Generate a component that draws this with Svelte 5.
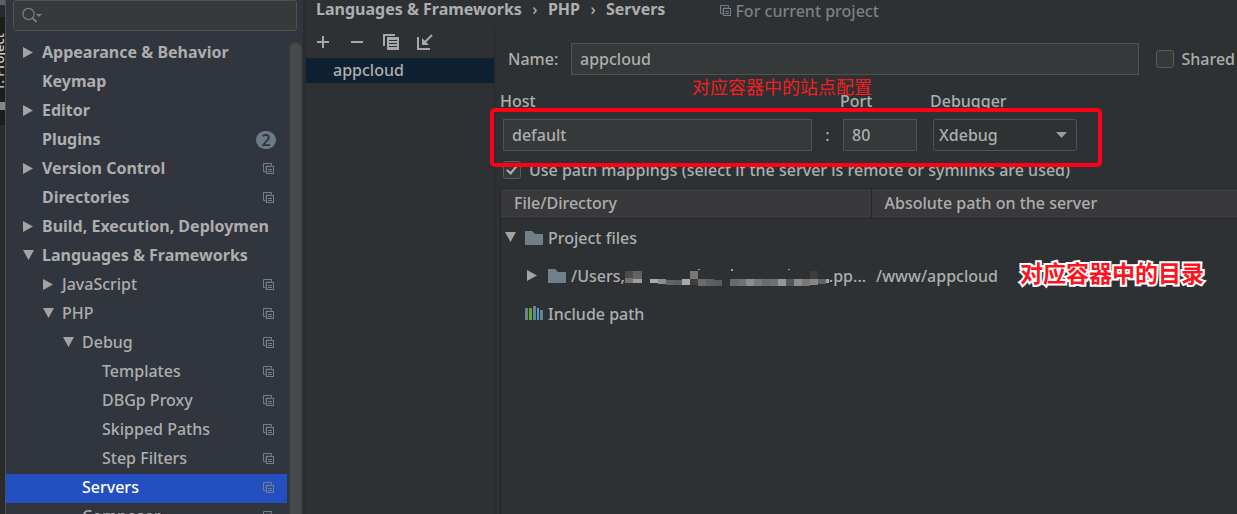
<script>
  const tree = [
    { label: 'Appearance & Behavior', level: 0, arrow: 'right' },
    { label: 'Keymap', level: 0 },
    { label: 'Editor', level: 0, arrow: 'right' },
    { label: 'Plugins', level: 0, badge: 2 },
    { label: 'Version Control', level: 0, arrow: 'right', project: true },
    { label: 'Directories', level: 0, project: true },
    { label: 'Build, Execution, Deploymen', level: 0, arrow: 'right' },
    { label: 'Languages & Frameworks', level: 0, arrow: 'down' },
    { label: 'JavaScript', level: 1, arrow: 'right', project: true },
    { label: 'PHP', level: 1, arrow: 'down', project: true },
    { label: 'Debug', level: 2, arrow: 'down', project: true },
    { label: 'Templates', level: 3, project: true },
    { label: 'DBGp Proxy', level: 3, project: true },
    { label: 'Skipped Paths', level: 3, project: true },
    { label: 'Step Filters', level: 3, project: true },
    { label: 'Servers', level: 2, project: true, selected: true },
    { label: 'Composer', level: 2, project: true }
  ];

  // Blocks of the pixelated part of the path: x, y, width, height, grey level
  const mosaic = [
    [0, 5, 8, 7, 75], [8, 5, 9, 9, 98], [0, 12, 8, 5, 115], [8, 13, 9, 4, 158],
    [25, 13, 8, 4, 170], [33, 13, 8, 5, 140], [41, 14, 8, 5, 100], [49, 14, 8, 5, 95],
    [57, 13, 8, 6, 168], [65, 5, 8, 8, 120], [65, 13, 8, 6, 62], [73, 13, 8, 7, 108],
    [81, 13, 8, 7, 95], [89, 14, 8, 6, 92], [73, 3, 2, 1, 160], [106, 3, 2, 2, 165],
    [163, 3, 2, 1, 150], [105, 13, 8, 7, 105], [113, 13, 8, 7, 112], [121, 13, 8, 7, 140],
    [129, 13, 8, 7, 120], [137, 13, 8, 7, 108], [145, 13, 8, 7, 112], [153, 13, 8, 7, 150],
    [161, 13, 8, 7, 85], [169, 13, 8, 7, 140], [177, 13, 8, 7, 120], [185, 5, 8, 8, 60],
    [185, 13, 8, 6, 135], [193, 13, 8, 5, 98], [201, 13, 3, 4, 165]
  ];

  let query = $state('');
  let name = $state('appcloud');
  let host = $state('default');
  let port = $state('80');
  let shared = $state(false);
  let mappings = $state(true);
</script>

{#snippet projectIcon()}
  <svg class="project" width="12" height="12" viewBox="0 0 12 12" fill="none" stroke="currentColor" aria-hidden="true">
    <path d="M2.5 8.500H.5V.5h8v2" />
    <path d="M3 10V3h6" opacity=".6" />
    <rect x="3.500" y="3.500" width="7" height="7" />
    <path d="M5 6.500h4M5 8.500h4" />
  </svg>
{/snippet}

{#snippet arrowIcon(dir)}
  <svg class="arrow" width="12" height="12" viewBox="0 0 12 12" fill="currentColor" aria-hidden="true">
    {#if dir === 'right'}
      <path d="M1 0v11l10-5.500z" />
    {:else}
      <path d="M1 0h11l-5.500 10z" />
    {/if}
  </svg>
{/snippet}

{#snippet folderIcon()}
  <svg class="folder" width="18" height="15" viewBox="0 0 18 15" aria-hidden="true">
    <path d="M0 0h7l3 3h8v11H0z" fill="#70808a" />
  </svg>
{/snippet}

<div class="window">
  <div class="strip"><span>1: Project</span></div>

  <aside>
    <label class="search">
      <svg width="22" height="18" viewBox="0 0 22 18" fill="none" stroke="#6f7f8a" aria-hidden="true">
        <circle cx="6.500" cy="7" r="5.600" stroke-width="1.300" />
        <path d="M10.500 11l4 4" stroke-width="2" />
        <path d="M14 7h6l-3 3z" fill="#6f7f8a" stroke="none" />
      </svg>
      <input type="search" aria-label="Search settings" bind:value={query} />
    </label>
    <div class="body">
      <nav>
        {#each tree as item}
          <a href="#settings" class="row level{item.level}" class:selected={item.selected}>
            <span class="slot">{#if item.arrow}{@render arrowIcon(item.arrow)}{/if}</span>
            <span class="label">{item.label}</span>
            {#if item.badge}<span class="badge">{item.badge}</span>{/if}
            {#if item.project}{@render projectIcon()}{/if}
          </a>
        {/each}
      </nav>
      <div class="scroll"></div>
    </div>
  </aside>

  <main>
    <header>
      <b>Languages &amp; Frameworks</b><i>›</i><b>PHP</b><i>›</i><b>Servers</b>
      <span class="scope">{@render projectIcon()}For current project</span>
    </header>

    <div class="content">
      <section class="list">
        <div class="toolbar">
          <button aria-label="Add">
            <svg width="16" height="16" viewBox="0 0 16 16" stroke="currentColor" stroke-width="2"><path d="M2 8h12M8 2v12" /></svg>
          </button>
          <button aria-label="Remove">
            <svg width="16" height="16" viewBox="0 0 16 16" stroke="currentColor" stroke-width="2"><path d="M2 8h12" /></svg>
          </button>
          <button aria-label="Copy">
            <svg width="16" height="16" viewBox="0 0 16 16" fill="currentColor">
              <path d="M0 0h12v2H2v10H0z" />
              <path fill-rule="evenodd" d="M4 3h12v13H4zM6 6h8v1H6zM6 9h8v1H6zM6 12h8v1H6z" />
            </svg>
          </button>
          <button aria-label="Import">
            <svg width="16" height="16" viewBox="0 0 16 16" fill="none" stroke="currentColor" stroke-width="2">
              <path d="M1 3v12h12" /><path d="M15 1L8 8" /><path d="M5 4v7h7z" fill="currentColor" stroke="none" />
            </svg>
          </button>
        </div>
        <a class="server" href="#appcloud">appcloud</a>
      </section>

      <section class="form">
        <div class="name-row">
          <label for="name">Name:</label>
          <input id="name" type="text" bind:value={name} />
          <label class="check"><input type="checkbox" bind:checked={shared} />Shared</label>
        </div>

        <div class="connection">
          <p class="note">对应容器中的站点配置</p>
          <label for="host">Host</label>
          <label for="port">Port</label>
          <label for="debugger">Debugger</label>
          <input id="host" type="text" bind:value={host} />
          <span class="colon">:</span>
          <input id="port" type="text" bind:value={port} />
          <div class="combo">
            <select id="debugger"><option>Xdebug</option><option>Zend Debugger</option></select>
            <svg width="11" height="7" viewBox="0 0 11 7" aria-hidden="true"><path d="M0 0h11L5.500 6z" fill="#999b9c" /></svg>
          </div>
          <div class="frame"></div>
        </div>

        <label class="check mappings">
          <input type="checkbox" bind:checked={mappings} />Use path mappings (select if the server is remote or symlinks are used)
        </label>

        <div class="table">
          <table>
            <thead>
              <tr><th>File/Directory</th><th>Absolute path on the server</th></tr>
            </thead>
            <tbody>
              <tr>
                <td><div class="cell">{@render arrowIcon('down')}{@render folderIcon()}Project files</div></td>
                <td></td>
              </tr>
              <tr>
                <td>
                  <div class="cell nested">
                    {@render arrowIcon('right')}{@render folderIcon()}<span class="path">/Users,<svg width="204" height="20" viewBox="0 0 204 20" aria-hidden="true">
                      {#each mosaic as [x, y, w, h, g]}
                        <rect {x} {y} width={w} height={h} fill="rgb({g},{g},{g})" />
                      {/each}
                    </svg>.pp...</span>
                  </div>
                </td>
                <td><div class="target">/www/appcloud<strong>对应容器中的目录</strong></div></td>
              </tr>
              <tr>
                <td>
                  <div class="cell include">
                    <svg width="18" height="16" viewBox="0 0 18 16" aria-hidden="true">
                      <path d="M0 2h3v12H0zM8 0h3v14H8zM15 4h3v10h-3z" fill="#70808a" />
                      <path d="M4 2h3v12H4z" fill="#59a839" /><path d="M12 2h2v12h-2z" fill="#35a5dc" />
                    </svg>Include path
                  </div>
                </td>
                <td></td>
              </tr>
            </tbody>
          </table>
        </div>
      </section>
    </div>
  </main>
</div>

<style>
  :global(body) { margin: 0; background: #2e3133; }
  .window {
    display: flex; height: 100vh; overflow: hidden; color: #adaeae;
    font: 500 16px/20px "Noto Sans", "Noto Sans CJK SC", sans-serif;
  }
  svg { flex: none; display: block; }
  a { color: inherit; text-decoration: none; }

  .strip {
    width: 5px; flex: none; overflow: hidden; display: flex; justify-content: flex-end;
    background: linear-gradient(#59616a 5px, #292b2c 5px 17px, #1c1d1d 17px 102px, #85888a 102px 110px, #1c1d1d 110px 125px, #292b2c 125px);
    border-right: 1px solid #4d5155;
  }
  .strip span {
    writing-mode: vertical-rl; transform: rotate(180deg); height: 60px; margin-top: 31px;
    font-size: 13px; line-height: 12px; color: #d0d0d0; white-space: nowrap; flex: none;
  }

  aside { width: 297px; flex: none; display: flex; flex-direction: column; background: #31353d; }
  .search {
    display: flex; align-items: center; box-sizing: border-box; height: 31px; margin: 0 6px 8px 7px; padding-left: 8px;
    flex: none; background: #363a3a; border: 1px solid #505251; border-radius: 3px;
  }
  .search input { flex: 1; min-width: 0; border: 0; outline: 0; background: none; color: inherit; font: inherit; }
  .body { display: flex; flex: 1; min-height: 0; }
  nav { flex: 1; min-width: 0; overflow: hidden; }
  .row { display: flex; align-items: center; height: 29px; padding: 0 12px 2px 16px; box-sizing: border-box; }
  .level0 { font-weight: 700; }
  .level1 { padding-left: 36px; }
  .level2 { padding-left: 56px; }
  .level3 { padding-left: 76px; }
  .slot { width: 20px; flex: none; }
  .arrow { color: #a3a3a3; }
  .label { flex: 1; min-width: 0; white-space: nowrap; padding-bottom: 2px; }
  .badge {
    width: 20px; height: 18px; line-height: 18px; border-radius: 9px; margin-right: -1px; text-align: center;
    background: #6b7b86; color: #31353d; font-weight: 600;
  }
  .project { color: #71818c; }
  .selected { background: #244fc0; color: #fff; }
  .scroll { width: 11px; margin: 3px 1px 0 2px; background: #47494a; border: 1px solid #3b3d40; border-bottom: 0; border-radius: 7px 7px 0 0; flex: none; }

  main { flex: 1; min-width: 0; display: flex; flex-direction: column; background: #2e3133; border-left: 3px solid #292b2d; }
  header { display: flex; height: 27px; padding-left: 10px; flex: none; }
  header b { font-weight: 700; line-height: 18px; }
  header i { font-style: normal; line-height: 18px; width: 26px; text-align: center; }
  .scope { display: flex; align-items: center; gap: 3px; height: 22px; margin-left: 55px; color: #7d7f80; }

  .content { display: flex; flex: 1; min-height: 0; }
  .list { width: 188px; flex: none; border-right: 1px solid #242628; }
  .toolbar { display: flex; gap: 18px; height: 31px; padding: 0 9px 2px; align-items: center; box-sizing: border-box; }
  button { width: 16px; height: 16px; padding: 0; border: 0; background: none; color: #a6a8a9; }
  .server { display: block; height: 25px; line-height: 24px; padding-left: 27px; background: #0e2031; }

  .form { flex: 1; min-width: 0; padding: 16px 0 0 5px; display: flex; flex-direction: column; }
  input[type="text"], select {
    box-sizing: border-box; height: 32px; min-width: 0; width: 100%; margin: 0; padding: 0 8px;
    background: #363939; border: 1px solid #505151; border-radius: 0; color: inherit; font: inherit;
  }
  .name-row { display: flex; align-items: center; padding-left: 8px; }
  .name-row > label:first-child { width: 63px; flex: none; }
  .check { display: flex; align-items: center; gap: 8px; white-space: nowrap; }
  .name-row .check { margin: 0 2px 0 17px; gap: 7px; }
  input[type="checkbox"] {
    appearance: none; box-sizing: border-box; width: 18px; height: 18px; margin: 0; flex: none;
    background: #343a39; border: 1px solid #5a5c5c; border-radius: 3px;
  }
  input[type="checkbox"]:checked::before {
    content: ""; display: block; width: 4px; height: 9px; margin: 1px 0 0 5px;
    border: solid #b0b1b1; border-width: 0 2px 2px 0; transform: rotate(40deg);
  }

  .connection {
    position: relative; display: grid; grid-template-columns: 309px 31px 74px 160px;
    grid-template-rows: 20px 32px; row-gap: 8px; padding: 16px 0 0 3px;
  }
  .connection > label { margin-left: -3px; }
  .connection > label:nth-of-type(2) { grid-column: 3; }
  .connection > label:nth-of-type(3) { grid-column: 4; margin-left: 13px; }
  .colon { text-align: center; line-height: 32px; }
  .combo { position: relative; padding-left: 16px; }
  .combo select { appearance: none; padding: 0 5px; background: #2e3233; border-radius: 3px; }
  .combo svg { position: absolute; right: 10px; top: 13px; pointer-events: none; }
  .note {
    position: absolute; left: 192px; top: 1px; z-index: 1; margin: 0; color: #f51d20;
    font: 400 18px/20px "Noto Sans CJK SC", sans-serif;
  }
  .frame { position: absolute; left: -10px; top: 33px; width: 604px; height: 51px; border: 4px solid #ff0016; border-radius: 5px; z-index: 1; }
  .mappings { margin: 9px 0 8px 3px; }

  .table { flex: 1; border-left: 1px solid #232527; }
  table { width: 100%; border-collapse: collapse; table-layout: fixed; }
  th { height: 30px; box-sizing: border-box; padding: 0 13px 2px; text-align: left; font-weight: 500; background: #39393b; border: 1px solid #252729; border-width: 1px 0; }
  th:first-child { width: 370px; border-right-width: 1px; }
  td { height: 38px; padding: 0; }
  .cell { display: flex; align-items: center; padding-left: 3px; white-space: nowrap; }
  .cell .arrow { margin-right: 9px; }
  .folder { margin-right: 5px; }
  .nested { padding-left: 25px; }
  .nested .arrow { margin-right: 10px; }
  .path { display: flex; }
  .include { padding-left: 24px; gap: 5px; }
  .target { display: flex; padding-left: 5px; gap: 22px; white-space: nowrap; }
  strong {
    font: 700 23px/20px "Noto Sans CJK SC", sans-serif; color: #ff1220;
    -webkit-text-stroke: 4px #fff; paint-order: stroke fill; margin-top: -4px;
  }
</style>
